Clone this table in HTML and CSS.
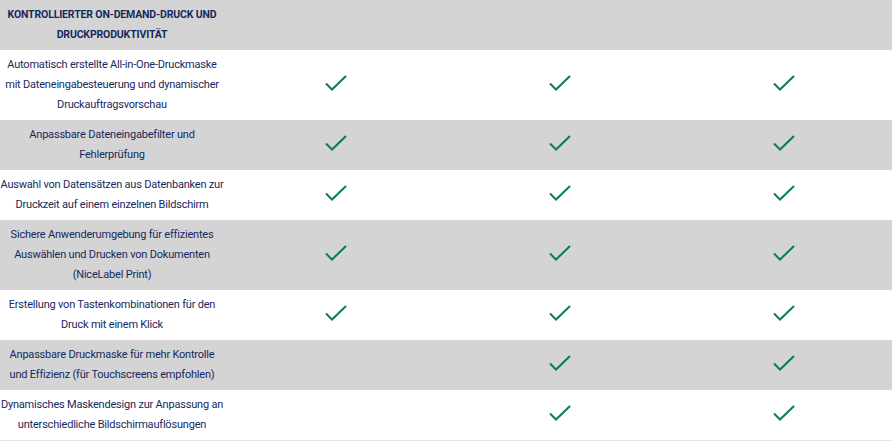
FILE: index.html
```html
<!DOCTYPE html>
<html lang="de">
<head>
<meta charset="utf-8">
<link rel="stylesheet" href="styles.css">
</head>
<body>
<div class="table">
  <div class="row head">
    <div class="cell label">KONTROLLIERTER ON-DEMAND-DRUCK UND DRUCKPRODUKTIVITÄT</div>
    <div class="cell"></div><div class="cell"></div><div class="cell"></div>
  </div>
  <div class="row">
    <div class="cell label">Automatisch erstellte All-in-One-Druckmaske mit Dateneingabesteuerung und dynamischer Druckauftragsvorschau</div>
    <div class="cell"><svg class="check" viewBox="0 0 22 16"><path d="M1 8.5L7 14.5L21 1"/></svg></div>
    <div class="cell"><svg class="check" viewBox="0 0 22 16"><path d="M1 8.5L7 14.5L21 1"/></svg></div>
    <div class="cell"><svg class="check" viewBox="0 0 22 16"><path d="M1 8.5L7 14.5L21 1"/></svg></div>
  </div>
  <div class="row alt">
    <div class="cell label">Anpassbare Dateneingabefilter und Fehlerprüfung</div>
    <div class="cell"><svg class="check" viewBox="0 0 22 16"><path d="M1 8.5L7 14.5L21 1"/></svg></div>
    <div class="cell"><svg class="check" viewBox="0 0 22 16"><path d="M1 8.5L7 14.5L21 1"/></svg></div>
    <div class="cell"><svg class="check" viewBox="0 0 22 16"><path d="M1 8.5L7 14.5L21 1"/></svg></div>
  </div>
  <div class="row">
    <div class="cell label">Auswahl von Datensätzen aus Datenbanken zur Druckzeit auf einem einzelnen Bildschirm</div>
    <div class="cell"><svg class="check" viewBox="0 0 22 16"><path d="M1 8.5L7 14.5L21 1"/></svg></div>
    <div class="cell"><svg class="check" viewBox="0 0 22 16"><path d="M1 8.5L7 14.5L21 1"/></svg></div>
    <div class="cell"><svg class="check" viewBox="0 0 22 16"><path d="M1 8.5L7 14.5L21 1"/></svg></div>
  </div>
  <div class="row alt">
    <div class="cell label">Sichere Anwenderumgebung für effizientes Auswählen und Drucken von Dokumenten (NiceLabel Print)</div>
    <div class="cell"><svg class="check" viewBox="0 0 22 16"><path d="M1 8.5L7 14.5L21 1"/></svg></div>
    <div class="cell"><svg class="check" viewBox="0 0 22 16"><path d="M1 8.5L7 14.5L21 1"/></svg></div>
    <div class="cell"><svg class="check" viewBox="0 0 22 16"><path d="M1 8.5L7 14.5L21 1"/></svg></div>
  </div>
  <div class="row">
    <div class="cell label">Erstellung von Tastenkombinationen für den Druck mit einem Klick</div>
    <div class="cell"><svg class="check" viewBox="0 0 22 16"><path d="M1 8.5L7 14.5L21 1"/></svg></div>
    <div class="cell"><svg class="check" viewBox="0 0 22 16"><path d="M1 8.5L7 14.5L21 1"/></svg></div>
    <div class="cell"><svg class="check" viewBox="0 0 22 16"><path d="M1 8.5L7 14.5L21 1"/></svg></div>
  </div>
  <div class="row alt">
    <div class="cell label">Anpassbare Druckmaske für mehr Kontrolle und Effizienz (für Touchscreens empfohlen)</div>
    <div class="cell"></div>
    <div class="cell"><svg class="check" viewBox="0 0 22 16"><path d="M1 8.5L7 14.5L21 1"/></svg></div>
    <div class="cell"><svg class="check" viewBox="0 0 22 16"><path d="M1 8.5L7 14.5L21 1"/></svg></div>
  </div>
  <div class="row last">
    <div class="cell label">Dynamisches Maskendesign zur Anpassung an unterschiedliche Bildschirmauflösungen</div>
    <div class="cell"></div>
    <div class="cell"><svg class="check" viewBox="0 0 22 16"><path d="M1 8.5L7 14.5L21 1"/></svg></div>
    <div class="cell"><svg class="check" viewBox="0 0 22 16"><path d="M1 8.5L7 14.5L21 1"/></svg></div>
  </div>
</div>
</body>
</html>
```

FILE: styles.css
```css
html, body {
  margin: 0;
  padding: 0;
  background: #ffffff;
  overflow: hidden;
}
body {
  font-family: Roboto, "Noto Sans", Arial, sans-serif;
  color: #17285e;
}
.table {
  width: 896px;
  border-bottom: 1px solid #e4e4e4;
}
.row {
  display: grid;
  grid-template-columns: 224px 224px 224px 224px;
  background: #ffffff;
}
.row.head, .row.alt {
  background: #d4d4d4;
}
.cell {
  display: flex;
  align-items: center;
  justify-content: center;
  padding: 5px 0;
}
.label {
  text-align: center;
  font-size: 11px;
  letter-spacing: -0.2px;
  line-height: 20px;
  padding: 5px 0;
}
.head .label {
  font-weight: 700;
  font-size: 10.5px;
  letter-spacing: -0.15px;
}
.check {
  width: 22px;
  height: 16px;
  margin-bottom: 4px;
  fill: none;
  stroke: #0d7a56;
  stroke-width: 2;
}
```
